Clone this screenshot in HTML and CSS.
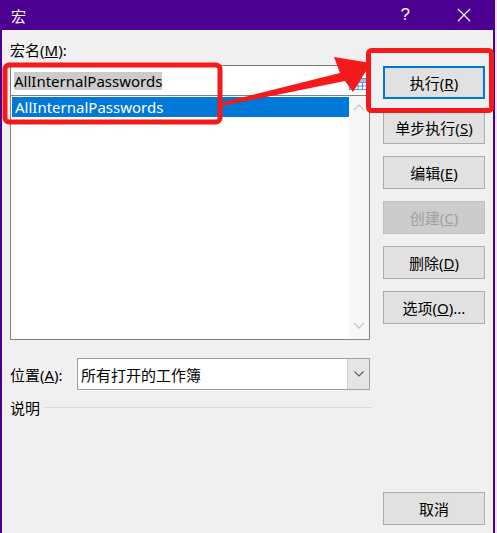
FILE: index.html
```html
<!DOCTYPE html>
<html lang="zh-CN">
<head>
<meta charset="utf-8">
<title>宏</title>
<link rel="stylesheet" href="styles.css">
</head>
<body>
<div class="window">
  <div class="titlebar">
    <span class="title">宏</span>
    <span class="help">?</span>
    <svg class="close" width="14" height="14" viewBox="0 0 14 14"><path d="M1 1 L13 13 M13 1 L1 13" stroke="#fff" stroke-width="1.2" fill="none"/></svg>
  </div>
  <div class="body">
    <div class="left">
      <div class="label">宏名(<u>M</u>):</div>
      <div class="namebox">
        <span class="sel">AllInternalPasswords</span>
        <svg class="refedit" width="20" height="16" viewBox="0 0 20 16">
          <rect x="1.5" y="4.5" width="17" height="11" fill="#fff" stroke="#5b8fd6"/>
          <path d="M1.5 8.5 H18.5 M1.5 12 H18.5 M6 4.5 V15.5 M10 4.5 V15.5 M14.5 4.5 V15.5" stroke="#5b8fd6" stroke-width="1"/>
          <rect x="2" y="5" width="16" height="3" fill="#9cc0ee"/>
          <path d="M9 0 L12 3 L9 5 Z" fill="#c0392b"/>
        </svg>
      </div>
      <div class="list">
        <div class="items">
          <div class="item selected">AllInternalPasswords</div>
        </div>
        <div class="scroll">
          <svg width="12" height="8" viewBox="0 0 12 8"><path d="M1 7 L6 2 L11 7" stroke="#c8c8c8" stroke-width="1.3" fill="none"/></svg>
          <svg width="12" height="8" viewBox="0 0 12 8"><path d="M1 1 L6 6 L11 1" stroke="#c8c8c8" stroke-width="1.3" fill="none"/></svg>
        </div>
      </div>
      <div class="loc-row">
        <span class="loc-label">位置(<u>A</u>):</span>
        <div class="combo">
          <span class="combo-text">所有打开的工作簿</span>
          <div class="drop">
            <svg width="10" height="6" viewBox="0 0 10 6"><path d="M0.5 0.5 L5 5 L9.5 0.5" stroke="#606060" stroke-width="1.1" fill="none"/></svg>
          </div>
        </div>
      </div>
      <div class="desc">
        <span>说明</span>
        <div class="rule"></div>
      </div>
    </div>
    <div class="right">
      <button class="btn default">执行(<u>R</u>)</button>
      <button class="btn">单步执行(<u>S</u>)</button>
      <button class="btn">编辑(<u>E</u>)</button>
      <button class="btn disabled">创建(<u>C</u>)</button>
      <button class="btn">删除(<u>D</u>)</button>
      <button class="btn">选项(<u>O</u>)...</button>
      <button class="btn cancel">取消</button>
    </div>
  </div>
  <svg class="annot" width="497" height="533" viewBox="0 0 497 533">
    <rect x="5" y="65" width="215" height="57" rx="4" fill="none" stroke="#f5191c" stroke-width="5"/>
    <rect x="368.5" y="50.5" width="123" height="60" rx="3" fill="none" stroke="#f5191c" stroke-width="5"/>
    <polygon points="220,103 340,73 334,57 371,63 353,92 345,81 222,106" fill="#f5191c"/>
  </svg>
</div>
</body>
</html>
```
FILE: styles.css
```css
html, body {
  margin: 0;
  padding: 0;
  background: #ece6f3;
}
body {
  font-family: "Noto Sans", "Noto Sans CJK SC", sans-serif;
  font-size: 15px;
  color: #000;
}
.window {
  position: relative;
  width: 491px;
  height: 533px;
  border-left: 2px solid #4b0091;
  border-right: 2px solid #4b0091;
  background: #f0f0f0;
  display: flex;
  flex-direction: column;
}
.titlebar {
  height: 30px;
  background: #4b0091;
  color: #fff;
  display: flex;
  align-items: center;
  flex-shrink: 0;
}
.title {
  margin-left: 9px;
  font-size: 15px;
  flex: 1;
}
.help {
  font-size: 17px;
  margin-right: 47px;
  font-family: "Liberation Sans", sans-serif;
}
.close {
  margin-right: 22px;
}
.body {
  flex: 1;
  display: flex;
  padding-left: 8px;
  gap: 13px;
}
.left {
  width: 360px;
  padding-top: 11px;
  display: flex;
  flex-direction: column;
}
.label {
  height: 18px;
  line-height: 18px;
  margin-bottom: 6px;
}
.namebox {
  height: 29px;
  background: #fff;
  border: 1px solid #7a7a7a;
  border-bottom: none;
  display: flex;
  align-items: center;
  padding-left: 3px;
  position: relative;
}
.sel {
  background: #cccccc;
  height: 18px;
  line-height: 18px;
}
.refedit {
  position: absolute;
  right: 1px;
  top: 8px;
}
.list {
  height: 243px;
  border: 1px solid #828282;
  background: #fff;
  display: flex;
}
.items {
  flex: 1;
  padding: 1px 0 0 1px;
}
.item {
  height: 20px;
  line-height: 20px;
  padding-left: 3px;
}
.item.selected {
  background: #0078d7;
  color: #fff;
}
.scroll {
  width: 20px;
  background: #f7f7f7;
  display: flex;
  flex-direction: column;
  justify-content: space-between;
  align-items: center;
  padding: 7px 0 9px;
}
.loc-row {
  margin-top: 18px;
  display: flex;
  align-items: center;
}
.loc-label {
  width: 67px;
}
.combo {
  flex: 1;
  height: 30px;
  border: 1px solid #a0a0a0;
  background: #fff;
  display: flex;
  align-items: center;
}
.combo-text {
  flex: 1;
  padding-left: 3px;
}
.drop {
  width: 21px;
  height: 30px;
  background: #e5e5e5;
  border-left: 1px solid #cfcfcf;
  display: flex;
  align-items: center;
  justify-content: center;
}
.desc {
  margin-top: 7px;
  height: 20px;
  display: flex;
  align-items: center;
  gap: 5px;
}
.rule {
  flex: 1;
  height: 1px;
  background: #d9d9d9;
  margin-right: -2px;
}
.right {
  width: 102px;
  padding-top: 36px;
  padding-bottom: 8px;
  display: flex;
  flex-direction: column;
  gap: 12px;
}
.btn {
  height: 33px;
  width: 102px;
  border: 1px solid #adadad;
  background: #e1e1e1;
  font-family: "Noto Sans", "Noto Sans CJK SC", sans-serif;
  font-size: 15px;
  color: #000;
  padding: 0;
  margin: 0;
}
.btn.default {
  border: 2px solid #0078d7;
}
.btn.disabled {
  background: #cccccc;
  border-color: #bfbfbf;
  color: #a0a0a0;
}
.btn.cancel {
  margin-top: auto;
}
.annot {
  position: absolute;
  left: -2px;
  top: 0;
  pointer-events: none;
}
```
